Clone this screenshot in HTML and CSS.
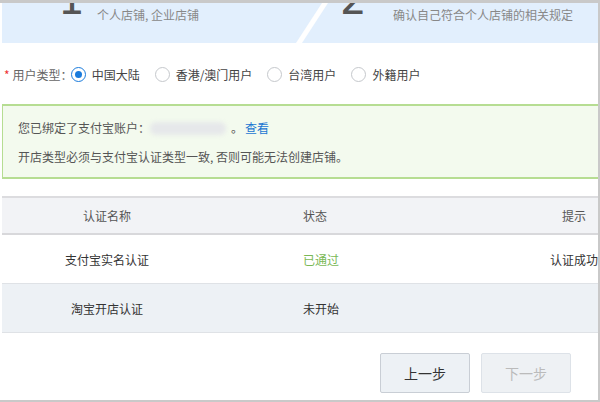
FILE: index.html
```html
<!DOCTYPE html>
<html lang="zh">
<head>
<meta charset="utf-8">
<link rel="stylesheet" href="styles.css">
</head>
<body>
<div class="frame">
  <div class="steps">
    <div class="step step-one">
      <span class="num num-one">1</span>
      <span class="step-text">个人店铺, 企业店铺</span>
    </div>
    <div class="step step-two">
      <span class="num num-two">2</span>
      <span class="step-text">确认自己符合个人店铺的相关规定</span>
    </div>
    <div class="slash"></div>
  </div>

  <div class="type-row">
    <span class="req">*</span>
    <span class="label">用户类型：</span>
    <label class="radio"><span class="dot checked"></span>中国大陆</label>
    <label class="radio"><span class="dot"></span>香港/澳门用户</label>
    <label class="radio"><span class="dot"></span>台湾用户</label>
    <label class="radio"><span class="dot"></span>外籍用户</label>
  </div>

  <div class="alert">
    <div class="alert-line">您已绑定了支付宝账户：<span class="blur"></span>。<a class="link">查看</a></div>
    <div class="alert-line">开店类型必须与支付宝认证类型一致, 否则可能无法创建店铺。</div>
  </div>

  <div class="table-wrap">
    <div class="table">
      <div class="tr th">
        <div class="c1">认证名称</div>
        <div class="c2">状态</div>
        <div class="c3">提示</div>
      </div>
      <div class="tr">
        <div class="c1">支付宝实名认证</div>
        <div class="c2 ok">已通过</div>
        <div class="c3">认证成功</div>
      </div>
      <div class="tr alt">
        <div class="c1">淘宝开店认证</div>
        <div class="c2">未开始</div>
        <div class="c3"></div>
      </div>
    </div>
  </div>

  <div class="actions">
    <button class="btn">上一步</button>
    <button class="btn disabled">下一步</button>
  </div>
</div>
</body>
</html>
```
FILE: styles.css
```css
html, body {
  margin: 0;
  padding: 0;
  background: #fff;
}
body {
  width: 600px;
  height: 402px;
  overflow: hidden;
  font-family: "Noto Sans CJK SC", "Noto Sans", sans-serif;
  font-size: 12px;
  color: #333;
}
.frame {
  box-sizing: border-box;
  width: 600px;
  height: 402px;
  border-top: 3px solid #c9c9c9;
  border-right: 2px solid #c9c9c9;
  border-bottom: 2px solid #c9c9c9;
  overflow: hidden;
}
.steps {
  position: relative;
  margin-left: 2px;
  height: 40px;
  background: #e2effd;
  display: flex;
  overflow: hidden;
}
.step {
  display: flex;
  align-items: flex-start;
  height: 40px;
}
.step-one {
  width: 318px;
  padding-left: 56px;
  box-sizing: border-box;
}
.step-two {
  padding-left: 20px;
}
.num {
  font-family: "DejaVu Sans", sans-serif;
  font-size: 42px;
  line-height: 42px;
  color: #555;
  margin-top: -24px;
}
.num-one {
  width: 39px;
}
.num-two {
  width: 53px;
}
.step-text {
  color: #888;
  font-size: 12px;
  line-height: 16px;
  margin-top: 4px;
}
.slash {
  position: absolute;
  top: 0;
  left: 307px;
  width: 6px;
  height: 40px;
  background: #fff;
  transform: skewX(-33deg);
}
.type-row {
  display: flex;
  align-items: center;
  height: 24px;
  margin-top: 19px;
  padding-left: 4px;
  color: #555;
}
.req {
  color: #e33;
  margin-right: 3px;
}
.label {
  color: #666;
  margin-right: -2px;
}
.radio {
  display: flex;
  align-items: center;
  margin-right: 15px;
  color: #444;
}
.dot {
  box-sizing: border-box;
  width: 15px;
  height: 15px;
  border: 1px solid #c5c8cc;
  border-radius: 50%;
  margin-right: 6px;
  background: #fff;
  position: relative;
}
.dot.checked {
  border-color: #1a7bdc;
}
.dot.checked::after {
  content: "";
  position: absolute;
  left: 3px;
  top: 3px;
  width: 7px;
  height: 7px;
  border-radius: 50%;
  background: #1a7bdc;
}
.alert {
  box-sizing: border-box;
  margin: 18px 0 0 2px;
  height: 75px;
  border: 1px solid #b6dd92;
  border-width: 2px 0 2px 1px;
  background: #f3faee;
  padding: 14px 0 0 15px;
  color: #555;
}
.alert-line {
  height: 16px;
  line-height: 16px;
  display: flex;
  align-items: center;
}
.alert-line + .alert-line {
  margin-top: 13px;
}
.blur {
  display: inline-block;
  width: 76px;
  height: 13px;
  border-radius: 6px;
  background: #e6e8ea;
  margin: 0 5px 0 0;
  filter: blur(2px);
}
.link {
  color: #1b76d2;
  margin-left: 2px;
}
.table-wrap {
  margin: 17px 0 0 2px;
  overflow: hidden;
}
.table {
  width: 650px;
}
.tr {
  display: flex;
  height: 48px;
  align-items: center;
  border-bottom: 1px solid #dfe2e6;
  color: #333;
}
.tr.th {
  height: 35px;
  background: #f2f3f6;
  border-top: 2px solid #dcdcdf;
  border-bottom: 2px solid #d8d8db;
  color: #555;
}
.tr.alt {
  background: #edf1f5;
}
.c1 {
  width: 210px;
  text-align: center;
}
.c2 {
  width: 200px;
  padding-left: 91px;
}
.c3 {
  width: 142px;
  text-align: center;
}
.ok {
  color: #7ab856;
}
.actions {
  display: flex;
  justify-content: flex-end;
  gap: 11px;
  margin-top: 20px;
  padding-right: 27px;
}
.btn {
  box-sizing: border-box;
  width: 90px;
  height: 40px;
  border: 1px solid #c9ced5;
  border-radius: 2px;
  background: #edf1f5;
  font-family: "Noto Sans CJK SC", sans-serif;
  font-size: 14px;
  color: #333;
  padding: 0;
}
.btn.disabled {
  border-color: #dde2e8;
  background: #eef1f4;
  color: #bbb;
}
```
